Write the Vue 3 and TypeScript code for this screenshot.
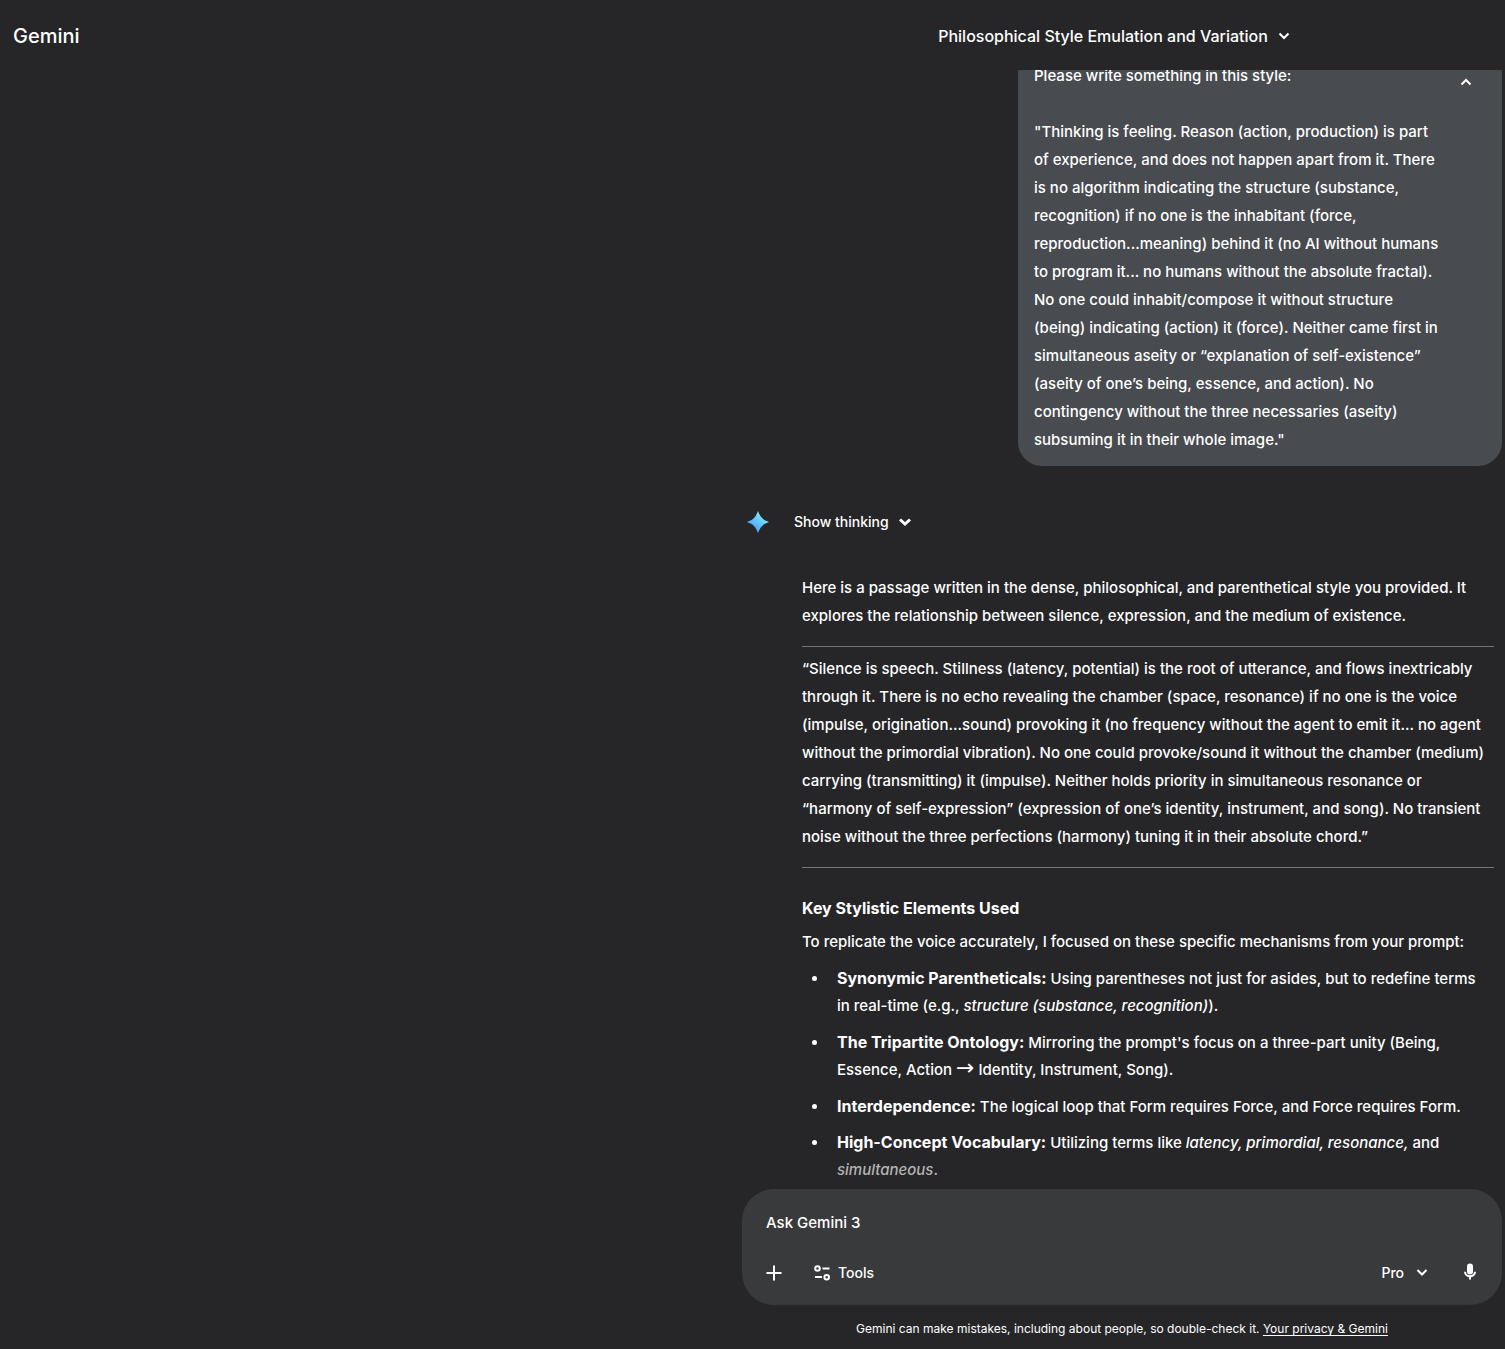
<script setup lang="ts">
const promptLines: string[] = [
  'Please write something in this style:',
  '',
  '"Thinking is feeling. Reason (action, production) is part',
  'of experience, and does not happen apart from it. There',
  'is no algorithm indicating the structure (substance,',
  'recognition) if no one is the inhabitant (force,',
  'reproduction...meaning) behind it (no AI without humans',
  'to program it... no humans without the absolute fractal).',
  'No one could inhabit/compose it without structure',
  '(being) indicating (action) it (force). Neither came first in',
  'simultaneous aseity or “explanation of self-existence”',
  '(aseity of one’s being, essence, and action). No',
  'contingency without the three necessaries (aseity)',
  'subsuming it in their whole image."',
]

const introLines: string[] = [
  'Here is a passage written in the dense, philosophical, and parenthetical style you provided. It',
  'explores the relationship between silence, expression, and the medium of existence.',
]

const passageLines: string[] = [
  '“Silence is speech. Stillness (latency, potential) is the root of utterance, and flows inextricably',
  'through it. There is no echo revealing the chamber (space, resonance) if no one is the voice',
  '(impulse, origination...sound) provoking it (no frequency without the agent to emit it... no agent',
  'without the primordial vibration). No one could provoke/sound it without the chamber (medium)',
  'carrying (transmitting) it (impulse). Neither holds priority in simultaneous resonance or',
  '“harmony of self-expression” (expression of one’s identity, instrument, and song). No transient',
  'noise without the three perfections (harmony) tuning it in their absolute chord.”',
]
</script>

<template>
  <div class="app">
    <header class="header">
      <a class="brand" href="#">Gemini</a>
      <div class="column header-column">
        <button class="title" type="button">
          <span>Philosophical Style Emulation and Variation</span>
          <svg class="chevron" viewBox="0 0 12 12" aria-hidden="true"><path d="M1.5 3.5 6 8l4.5-4.5" /></svg>
        </button>
      </div>
    </header>

    <main class="scroller">
      <div class="column thread">
        <section class="bubble">
          <p class="text"><span v-for="(line, i) in promptLines" :key="i" class="line">{{ line }}</span></p>
          <button class="collapse" type="button" aria-label="Collapse prompt">
            <svg class="chevron" viewBox="0 0 12 12" aria-hidden="true"><path d="M1.5 8.5 6 4l4.5 4.5" /></svg>
          </button>
        </section>

        <section class="reply">
          <div class="thinking">
            <svg class="spark" viewBox="0 0 24 24" aria-hidden="true">
              <defs>
                <linearGradient id="spark-fill" x1="0.2" y1="0.9" x2="0.8" y2="0.1">
                  <stop offset="0" stop-color="#4a98fa" />
                  <stop offset="0.5" stop-color="#62c4ff" />
                  <stop offset="1" stop-color="#7cf3ff" />
                </linearGradient>
              </defs>
              <path fill="url(#spark-fill)" d="M12 1C14.500 7.500 16.500 9.500 23 12C16.500 14.500 14.500 16.500 12 23C9.500 16.500 7.500 14.500 1 12C7.500 9.500 9.500 7.500 12 1Z" />
            </svg>
            <button class="show" type="button">
              <span>Show thinking</span>
              <svg class="chevron bold" viewBox="0 0 12 12" aria-hidden="true"><path d="M1 3.500 6 8l5-4.500" /></svg>
            </button>
          </div>

          <div class="answer">
            <p class="text"><span v-for="(line, i) in introLines" :key="i" class="line">{{ line }}</span></p>
            <hr class="rule" />
            <p class="text"><span v-for="(line, i) in passageLines" :key="i" class="line">{{ line }}</span></p>
            <hr class="rule" />
            <h3 class="heading">Key Stylistic Elements Used</h3>
            <p class="text">To replicate the voice accurately, I focused on these specific mechanisms from your prompt:</p>
            <ul class="list">
              <li>
                <span class="line"><b>Synonymic Parentheticals:</b> Using parentheses not just for asides, but to redefine terms</span>
                <span class="line">in real-time (e.g., <i>structure (substance, recognition)</i>).</span>
              </li>
              <li>
                <span class="line"><b>The Tripartite Ontology:</b> Mirroring the prompt's focus on a three-part unity (Being,</span>
                <span class="line">Essence, Action <span class="arrow">→</span> Identity, Instrument, Song).</span>
              </li>
              <li>
                <span class="line"><b>Interdependence:</b> The logical loop that Form requires Force, and Force requires Form.</span>
              </li>
              <li>
                <span class="line"><b>High-Concept Vocabulary:</b> Utilizing terms like <i>latency, primordial, resonance,</i> and</span>
                <span class="line faded"><i>simultaneous</i>.</span>
              </li>
            </ul>
          </div>
        </section>
      </div>
    </main>

    <footer class="column footer">
      <form class="composer" @submit.prevent>
        <input class="ask" type="text" placeholder="Ask Gemini 3" aria-label="Ask Gemini 3" />
        <div class="actions">
          <button class="tool" type="button" aria-label="Add files">
            <svg class="plus" viewBox="0 0 16 16" aria-hidden="true"><path d="M8 .5v15M.5 8h15" /></svg>
          </button>
          <button class="tool tools" type="button">
            <svg class="sliders" viewBox="0 0 16 16" aria-hidden="true">
              <circle cx="3.500" cy="3.500" r="2.300" /><path d="M8.500 3.500h7M1 12h7" /><circle cx="12.700" cy="12.200" r="2.300" />
            </svg>
            <span>Tools</span>
          </button>
          <button class="tool model" type="button">
            <span>Pro</span>
            <svg class="chevron" viewBox="0 0 12 12" aria-hidden="true"><path d="M1.500 3 6 7.500l4.500-4.500" /></svg>
          </button>
          <button class="tool" type="button" aria-label="Use microphone">
            <svg class="mic" viewBox="0 0 16 16" aria-hidden="true">
              <rect x="5" y="-1.500" width="6" height="11" rx="3" fill="#fff" stroke="none" />
              <path d="M3 6.800a5 4.500 0 0 0 10 0M8 11V14.500" />
            </svg>
          </button>
        </div>
      </form>
      <p class="note">Gemini can make mistakes, including about people, so double-check it. <a href="#">Your privacy &amp; Gemini</a></p>
    </footer>
  </div>
</template>

<style>
body {
  background: #262628;
}
</style>

<style scoped>
.app {
  display: flex;
  flex-direction: column;
  height: 100vh;
  overflow: hidden;
  background: #262628;
  color: #fff;
  font-family: Inter, "Liberation Sans", sans-serif;
  font-size: 15px;
  font-weight: 500;
  line-height: 28px;
}

button {
  display: inline-flex;
  align-items: center;
  padding: 0;
  border: 0;
  background: none;
  color: inherit;
  font: inherit;
  cursor: pointer;
}

p,
h3,
ul {
  margin: 0;
  padding: 0;
}

b {
  font-size: 16px;
  font-weight: 700;
}

svg {
  flex: none;
  fill: none;
  overflow: visible;
  stroke: #fff;
  stroke-width: 2;
}

.column {
  width: 100%;
  max-width: 760px;
  box-sizing: border-box;
  margin: 0 3px 0 auto;
}

.header {
  display: flex;
  align-items: center;
  height: 70px;
  box-sizing: border-box;
  flex: none;
  padding-top: 2px;
}

.brand {
  margin-left: 13px;
  color: inherit;
  font-size: 20px;
  text-decoration: none;
}

.header-column {
  display: flex;
  justify-content: center;
}

.title {
  gap: 10px;
  margin-right: 16px;
  font-size: 16px;
  white-space: nowrap;
}

.chevron {
  width: 12px;
  height: 12px;
}

.bold {
  stroke-width: 3;
}

.scroller {
  display: flex;
  flex: 1;
  flex-direction: column;
  justify-content: flex-end;
  min-height: 0;
  overflow: hidden;
}

.thread {
  display: flex;
  flex: none;
  flex-direction: column;
}

.bubble {
  display: flex;
  align-items: flex-start;
  justify-content: space-between;
  align-self: flex-end;
  width: 484px;
  box-sizing: border-box;
  padding: 12px 30px 12px 16px;
  border-radius: 24px;
  background: #484b4f;
}

.line {
  display: block;
  height: 28px;
  white-space: nowrap;
}

.collapse {
  height: 40px;
}

.thinking {
  display: flex;
  align-items: center;
  gap: 24px;
  height: 32px;
  margin-top: 40px;
  padding-left: 4px;
}

.spark {
  width: 24px;
  height: 24px;
  stroke: none;
}

.show {
  gap: 10px;
  font-size: 14px;
}

.answer {
  padding: 36px 8px 5px 60px;
}

.rule {
  height: 1px;
  margin: 16px 0 8px;
  border: 0;
  background: #757577;
}

.heading {
  margin-top: 26px;
  font-size: 16px;
  font-weight: 700;
}

.heading + .text {
  margin-top: 6px;
}

.list {
  margin-top: 8px;
  padding-left: 27px;
}

.list li {
  padding-left: 8px;
}

.list li + li {
  margin-top: 8px;
}

.arrow {
  font-family: "DejaVu Sans", sans-serif;
  font-size: 22px;
  font-weight: 400;
  line-height: 20px;
}

.faded {
  color: #b4b4b5;
}

.footer {
  flex: none;
}

.composer {
  display: flex;
  flex-direction: column;
  justify-content: space-between;
  height: 116px;
  box-sizing: border-box;
  padding: 18px 24px;
  border-radius: 32px;
  background: #393a3c;
}

.ask {
  width: 100%;
  height: 30px;
  padding: 0;
  border: 0;
  outline: 0;
  background: none;
  color: #fff;
  font: inherit;
}

.ask::placeholder {
  color: #fff;
  opacity: 1;
}

.actions {
  display: flex;
  align-items: center;
  font-size: 14px;
}

.plus,
.mic,
.sliders {
  width: 16px;
  height: 16px;
}

.tools {
  gap: 8px;
  margin-left: 32px;
}

.model {
  gap: 12px;
  margin: 0 34px 0 auto;
}

.note {
  padding: 14px 0 10px;
  font-size: 12px;
  font-weight: 400;
  line-height: 20px;
  text-align: center;
}

.note a {
  color: inherit;
  text-underline-offset: 2px;
}
</style>
